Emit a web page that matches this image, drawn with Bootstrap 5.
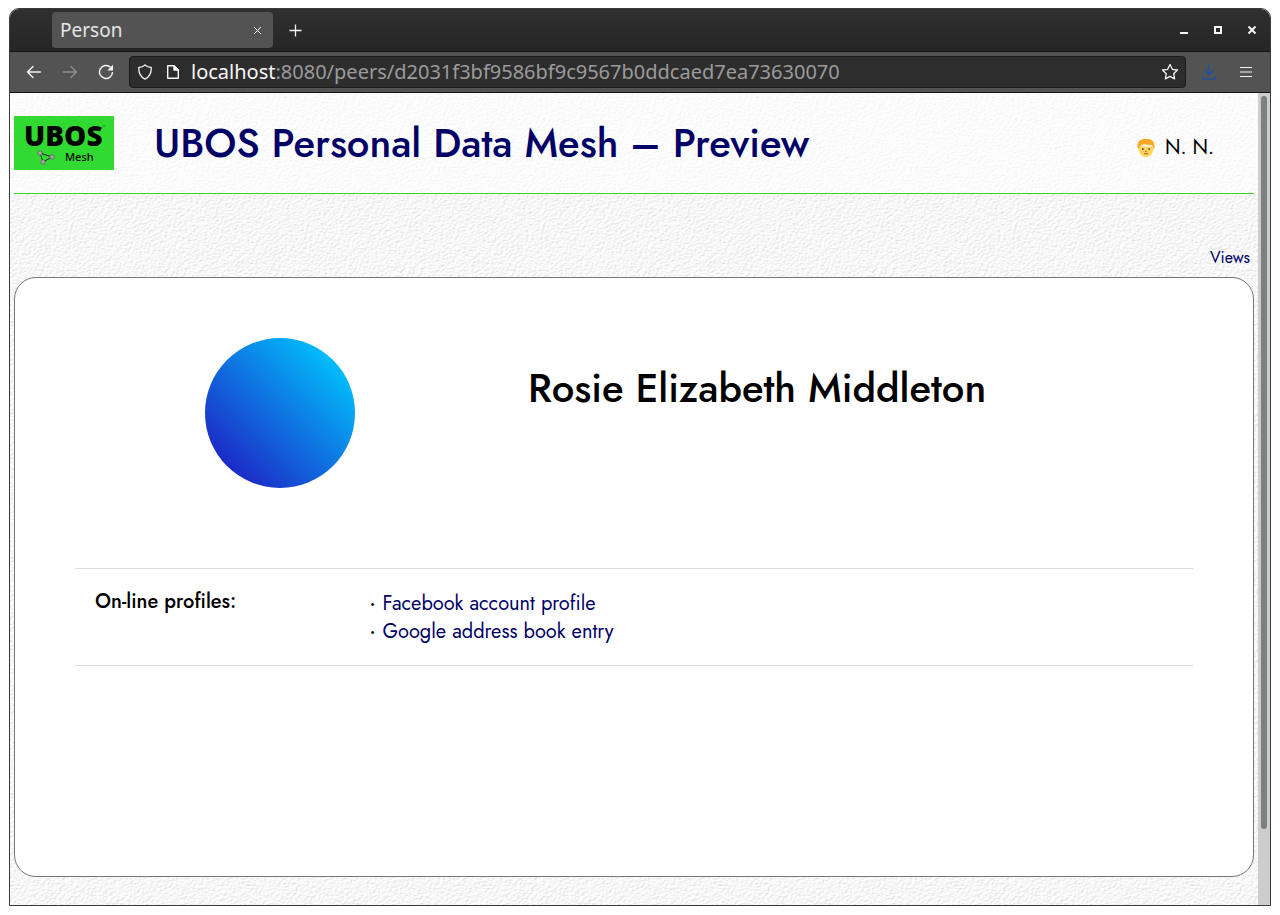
<!DOCTYPE html>
<html lang="en">
<head>
<meta charset="utf-8">
<meta name="viewport" content="width=device-width, initial-scale=1">
<title>Person</title>
<link href="https://cdn.jsdelivr.net/npm/bootstrap@5.3.0/dist/css/bootstrap.min.css" rel="stylesheet">
<style>
:root { --navy: #000066; --green: #30da30; }
body { background: #fff; color: #000; font-family: Jost, Lato, sans-serif; }
a { color: var(--navy); text-decoration: none; }
a:hover { text-decoration: underline; }
svg { display: block; }

.browser { min-height: 100vh; padding: 8px 9px 9px; }
.browser-window { border: 1px solid #3a3a3a; border-radius: 10px 10px 0 0; overflow: hidden; }
.chrome { font-family: "Noto Sans", sans-serif; font-size: 20px; }
.chrome button { background: none; border: 0; padding: 0; color: #f4f4f4; }
.titlebar { height: 43px; background: linear-gradient(#2f2f2f, #262626); border-bottom: 1px solid #141414; padding: 0 12px 0 42px; }
.tab-item { width: 221px; height: 36px; background: #535353; border-radius: 4px; color: #e6e6e6; padding: 0 11px 0 8px; font-size: 19px; }
.window-controls { gap: 22px; }
.toolbar { height: 41px; background: #535353; border-bottom: 1px solid #141414; padding: 0 18px 0 16px; }
.nav-buttons { gap: 20px; padding-right: 15px; }
.address { height: 32px; background: #2d2d2d; border: 1px solid #1b1b1b; border-radius: 4px; color: #f8f8f8; padding: 0 6px; }
.address-icons { gap: 13px; padding: 0 11px 0 1px; }
.address input { background: none; border: 0; outline: 0; color: #9b9b9b; padding: 0; min-width: 0; }

.viewport { background-color: #f5f5f5; background-image: url("data:image/svg+xml,%3Csvg xmlns='http://www.w3.org/2000/svg' width='236' height='236'%3E%3Cfilter id='p' x='0' y='0' width='100%25' height='100%25' color-interpolation-filters='sRGB'%3E%3CfeTurbulence type='fractalNoise' baseFrequency='.35 .6' numOctaves='4' seed='4' stitchTiles='stitch' result='n'/%3E%3CfeDiffuseLighting in='n' surfaceScale='.5' diffuseConstant='1.03' lighting-color='white'%3E%3CfeDistantLight azimuth='235' elevation='70'/%3E%3C/feDiffuseLighting%3E%3C/filter%3E%3Crect width='236' height='236' filter='url(%23p)'/%3E%3C/svg%3E"); }
.scrollbar-track { width: 12px; background: #cdcdcd; padding: 3px; }
.scrollbar-thumb { height: 91%; background: #7c8080; border-radius: 3px; }
.masthead { background: rgba(255, 255, 255, .6); padding: 0 4px; }
.masthead-inner { height: 101px; border-bottom: 1px solid var(--green); padding-right: 40px; }
.site-title { font-size: 40px; line-height: 48px; color: var(--navy); margin: 0 0 0 40px; }
.user { font-size: 20px; gap: 10px; padding-top: 10px; }
.views { font-size: 16px; line-height: 24px; padding: 52px 8px 7px; }
.sheet { min-height: 600px; background: #fff; border: 1px solid #777; border-radius: 22px; margin: 0 4px 28px; padding: 60px; }
.profile-head { display: grid; grid-template-columns: 11fr 19fr; min-height: 230px; }
.avatar { width: 150px; height: 150px; border-radius: 50%; background: linear-gradient(45deg, #1d25c4 12%, #00c6ff 90%); }
.person-name { font-size: 40px; line-height: 48px; margin: 0; padding: 26px 0 0 43px; }
.facts { border: 1px solid #ddd; border-width: 1px 0; padding: 20px 0 19px; font-size: 20px; line-height: 28px; }
.facts dt { padding-left: 20px; line-height: 26px; font-weight: 500; }
.facts dd { padding: 1px 0 0 15px; }
.facts li::before { content: "·"; display: inline-block; width: 13px; font-weight: 500; }
</style>
</head>
<body>
<div class="browser d-flex flex-column">
<div class="browser-window d-flex flex-column flex-grow-1">
  <div class="chrome">
    <div class="titlebar d-flex align-items-center">
      <div class="tab-item d-flex align-items-center justify-content-between">
        <span>Person</span>
        <button type="button" aria-label="Close tab"><svg width="9" height="9" viewBox="0 0 9 9" stroke="currentColor"><path d="M1 1l7 7M8 1L1 8"/></svg></button>
      </div>
      <button class="ms-3" type="button" aria-label="New tab"><svg width="13" height="13" viewBox="0 0 13 13" stroke="currentColor" stroke-width="1.3"><path d="M6.5 .5v12M.5 6.5h12"/></svg></button>
      <div class="window-controls d-flex ms-auto">
        <button type="button" aria-label="Minimize"><svg width="12" height="12" viewBox="0 0 12 12"><path fill="currentColor" d="M2 8h8v2H2z"/></svg></button>
        <button type="button" aria-label="Maximize"><svg width="12" height="12" viewBox="0 0 12 12" fill="none"><path stroke="currentColor" stroke-width="2" d="M3 3h6v6H3z"/></svg></button>
        <button type="button" aria-label="Close window"><svg width="12" height="12" viewBox="0 0 12 12"><path stroke="currentColor" stroke-width="2" d="M2.5 2.5l7 7M9.5 2.5l-7 7"/></svg></button>
      </div>
    </div>
    <div class="toolbar d-flex align-items-center">
      <div class="nav-buttons d-flex">
        <button type="button" aria-label="Back"><svg width="16" height="16" viewBox="0 0 16 16" fill="none" stroke="currentColor" stroke-width="1.4" stroke-linecap="round" stroke-linejoin="round"><path d="M14.5 8H1.5M7 2.5L1.5 8L7 13.5"/></svg></button>
        <button type="button" aria-label="Forward" disabled><svg width="16" height="16" viewBox="0 0 16 16" fill="none" stroke="#8c8c8c" stroke-width="1.4" stroke-linecap="round" stroke-linejoin="round"><path d="M1.5 8h13M9 2.5L14.5 8L9 13.5"/></svg></button>
        <button type="button" aria-label="Reload"><svg width="16" height="16" viewBox="0 0 16 16" fill="none" stroke="currentColor" stroke-width="1.4"><path d="M12.5 3.3A6.5 6.5 0 1 0 14.5 8"/><path fill="currentColor" stroke="none" d="M15 .8v5.7H9.3z"/></svg></button>
      </div>
      <div class="address d-flex align-items-center flex-grow-1">
        <div class="address-icons d-flex">
          <svg width="16" height="16" viewBox="0 0 17 18" fill="none" stroke="currentColor" stroke-width="1.4" stroke-linejoin="round"><path d="M8.5 1C6.5 3 4 3.7 1.5 3.9C1.2 9.5 3.5 14.5 8.5 17C13.5 14.5 15.8 9.5 15.5 3.9C13 3.7 10.5 3 8.5 1z"/></svg>
          <svg width="14" height="16" viewBox="0 0 14 16" fill="none" stroke="currentColor" stroke-width="1.4" stroke-linejoin="round"><path d="M1.7 1.7h6.3l4.3 4.3v8.3H1.7z"/><path fill="currentColor" d="M8 1.7V6h4.3z"/></svg>
        </div>
        <label for="url">localhost</label>
        <input class="flex-grow-1" id="url" type="text" value=":8080/peers/d2031f3bf9586bf9c9567b0ddcaed7ea73630070">
        <button type="button" aria-label="Bookmark"><svg width="18" height="18" viewBox="0 0 18 18" fill="none" stroke="currentColor" stroke-width="1.3" stroke-linejoin="round"><path d="M9 1.5l2.3 4.8 5.2.7-3.8 3.7.9 5.2L9 13.4l-4.6 2.5.9-5.2L1.5 7l5.2-.7z"/></svg></button>
      </div>
      <button class="ms-3" type="button" aria-label="Downloads"><svg width="14" height="16" viewBox="0 0 14 16" fill="none" stroke="#1c53a0" stroke-width="1.4" stroke-linecap="round" stroke-linejoin="round"><path d="M7 .7v10M2.8 6.5L7 10.7l4.2-4.2M.7 12v1.5c0 1 .6 1.6 1.6 1.6h9.4c1 0 1.6-.6 1.6-1.6V12"/></svg></button>
      <button class="ms-4" type="button" aria-label="Menu"><svg width="12" height="12" viewBox="0 0 12 12" stroke="currentColor" stroke-width="1.2"><path d="M0 1.5h12M0 6h12M0 10.5h12"/></svg></button>
    </div>
  </div>

  <div class="d-flex flex-grow-1">
    <div class="viewport flex-grow-1">
      <header class="masthead">
        <div class="masthead-inner d-flex align-items-center">
          <a href="#" aria-label="UBOS Mesh">
            <svg width="100" height="54" viewBox="0 0 100 54">
              <path fill="#30da30" d="M0 0h100v54H0z"/>
              <text x="10" y="30" font-family="Noto Sans, sans-serif" font-size="28" font-weight="900">UBOS</text>
              <circle cx="90" cy="10" r="1" fill="none" stroke="#22992a" stroke-width=".6"/>
              <path fill="none" stroke="#222" d="M26 37l12 4-9 5z"/>
              <g fill="#aaa" stroke="#555" stroke-width=".7"><circle cx="26" cy="37" r="2.2"/><circle cx="38" cy="41" r="2.2"/><circle cx="29" cy="46" r="2.2"/></g>
              <text x="51" y="45" font-family="Noto Sans, sans-serif" font-size="11" font-weight="500">Mesh</text>
            </svg>
          </a>
          <h1 class="site-title">UBOS Personal Data Mesh – Preview</h1>
          <div class="user d-flex align-items-center ms-auto">
            <svg width="18" height="20" viewBox="0 0 18 20">
              <path fill="#ffd65c" d="M2 8.5h14c1.6.2 1.6 3.5 0 3.7C15.5 16.5 12.5 19 9 19s-6.500-2.500-7-6.800C.4 12 .4 8.700 2 8.500z"/>
              <path fill="#ffa828" d="M.6 10C-.6 3.5 4 .2 9 1c5-.8 9.600 2.500 8.400 9l-1 .3c-.2-1.600-1-2.600-1.800-3.500-3 .6-5.800.3-8-.8-1 1.300-3.500 2-4.200 3L1.600 10.300z"/>
              <g fill="#674234"><circle cx="5.9" cy="11" r=".9"/><circle cx="12.1" cy="11" r=".9"/></g>
              <path fill="none" stroke="#b4562c" stroke-linecap="round" d="M7.2 15.6q1.800.9 3.600 0M8.500 13.300h1"/>
            </svg>
            <span>N. N.</span>
          </div>
        </div>
      </header>
      <nav class="views text-end"><a href="#">Views</a></nav>
      <main class="sheet">
        <section class="profile-head">
          <div class="avatar mx-auto"></div>
          <h2 class="person-name">Rosie Elizabeth Middleton</h2>
        </section>
        <dl class="facts row g-0 m-0">
          <dt class="col-3">On-line profiles:</dt>
          <dd class="col-9 mb-0">
            <ul class="list-unstyled m-0">
              <li><a href="#">Facebook account profile</a></li>
              <li><a href="#">Google address book entry</a></li>
            </ul>
          </dd>
        </dl>
      </main>
    </div>
    <div class="scrollbar-track"><div class="scrollbar-thumb"></div></div>
  </div>
</div>
</div>
<script src="https://cdn.jsdelivr.net/npm/bootstrap@5.3.0/dist/js/bootstrap.bundle.min.js"></script>
</body>
</html>
